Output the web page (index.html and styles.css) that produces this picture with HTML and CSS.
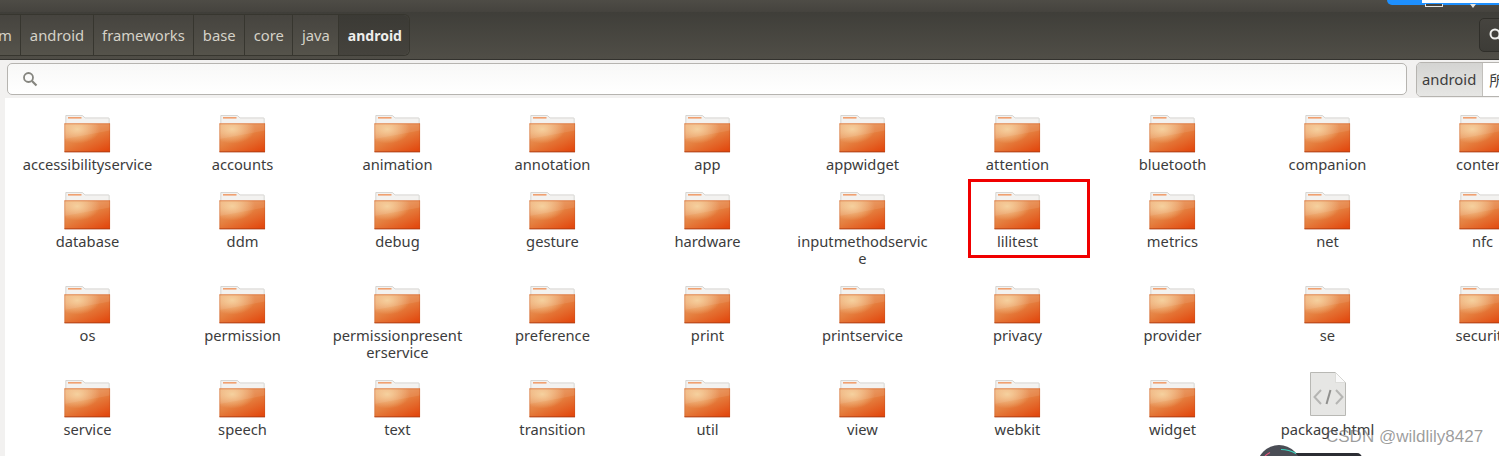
FILE: index.html
```html
<!DOCTYPE html>
<html lang="en">
<head>
  <meta charset="UTF-8">
  <title>android</title>
  <link rel="stylesheet" href="styles.css">
</head>
<body>

  <svg class="defs" width="0" height="0">
    <defs>
      <linearGradient id="folderFill" x1="0.15" y1="0" x2="0.85" y2="1">
        <stop offset="0" stop-color="#eca670"/>
        <stop offset="0.5" stop-color="#e57f3f"/>
        <stop offset="1" stop-color="#e2490f"/>
      </linearGradient>
      <radialGradient id="folderGlow" cx="0.28" cy="0.2" r="0.5">
        <stop offset="0" stop-color="#f6d09a" stop-opacity="0.95"/>
        <stop offset="1" stop-color="#f6d09a" stop-opacity="0"/>
      </radialGradient>
      <symbol id="folder" viewBox="0 0 48 38">
        <path d="M1.8.5h16.6l2.6 2.4h23.6a.6.6 0 0 1 .6.6V10H1.8z" fill="#f3f2f0" stroke="#c9c7c3" stroke-width="0.7"/>
        <rect x="4" y="2" width="13.5" height="1.6" fill="#f0a070"/>
        <rect x="0.5" y="8.5" width="45.5" height="28.5" fill="url(#folderFill)"/>
        <rect x="0.5" y="8.5" width="45.5" height="28.5" fill="url(#folderGlow)"/>
        <path d="M.5 24 46 15.5v-7H.5z" fill="#fff" opacity="0.08"/>
        <path d="M.5 8.8H46" stroke="#d9672c" stroke-width="0.6"/>
        <path d="M.8 8.5V37M45.7 8.5V37" stroke="#c4511f" stroke-width="0.5" opacity="0.7"/>
        <path d="M.5 36.9H46" stroke="#a83a12" stroke-width="0.9"/>
      </symbol>
    </defs>
  </svg>

  <div class="titlebar"></div>

  <div class="toolbar">
    <nav class="crumbs">
      <span class="crumb cut">m</span>
      <span class="crumb">android</span>
      <span class="crumb">frameworks</span>
      <span class="crumb">base</span>
      <span class="crumb">core</span>
      <span class="crumb">java</span>
      <span class="crumb current">android</span>
    </nav>
    <button class="tool-btn">
      <svg width="16" height="16" viewBox="0 0 16 16"><circle cx="7" cy="7" r="4.5" fill="none" stroke="#eeeeec" stroke-width="2"/><path d="M10.5 10.5 14 14" stroke="#eeeeec" stroke-width="2.4"/></svg>
    </button>
  </div>

  <div class="searchbar">
    <div class="search-field">
      <svg width="16" height="16" viewBox="0 0 16 16"><circle cx="6.5" cy="6.5" r="4.5" fill="none" stroke="#85857f" stroke-width="1.8"/><path d="M10 10l4.5 4.5" stroke="#85857f" stroke-width="2.2"/></svg>
    </div>
    <div class="scope">
      <span class="scope-item active">android</span>
      <span class="scope-item">所有文件</span>
    </div>
  </div>

  <main class="files">
    <div class="file"><svg class="icon"><use href="#folder"/></svg><span>accessibilityservice</span></div>
    <div class="file"><svg class="icon"><use href="#folder"/></svg><span>accounts</span></div>
    <div class="file"><svg class="icon"><use href="#folder"/></svg><span>animation</span></div>
    <div class="file"><svg class="icon"><use href="#folder"/></svg><span>annotation</span></div>
    <div class="file"><svg class="icon"><use href="#folder"/></svg><span>app</span></div>
    <div class="file"><svg class="icon"><use href="#folder"/></svg><span>appwidget</span></div>
    <div class="file"><svg class="icon"><use href="#folder"/></svg><span>attention</span></div>
    <div class="file"><svg class="icon"><use href="#folder"/></svg><span>bluetooth</span></div>
    <div class="file"><svg class="icon"><use href="#folder"/></svg><span>companion</span></div>
    <div class="file"><svg class="icon"><use href="#folder"/></svg><span>content</span></div>

    <div class="file"><svg class="icon"><use href="#folder"/></svg><span>database</span></div>
    <div class="file"><svg class="icon"><use href="#folder"/></svg><span>ddm</span></div>
    <div class="file"><svg class="icon"><use href="#folder"/></svg><span>debug</span></div>
    <div class="file"><svg class="icon"><use href="#folder"/></svg><span>gesture</span></div>
    <div class="file"><svg class="icon"><use href="#folder"/></svg><span>hardware</span></div>
    <div class="file"><svg class="icon"><use href="#folder"/></svg><span>inputmethodservic<br>e</span></div>
    <div class="file marked"><svg class="icon"><use href="#folder"/></svg><span>lilitest</span></div>
    <div class="file"><svg class="icon"><use href="#folder"/></svg><span>metrics</span></div>
    <div class="file"><svg class="icon"><use href="#folder"/></svg><span>net</span></div>
    <div class="file"><svg class="icon"><use href="#folder"/></svg><span>nfc</span></div>

    <div class="file"><svg class="icon"><use href="#folder"/></svg><span>os</span></div>
    <div class="file"><svg class="icon"><use href="#folder"/></svg><span>permission</span></div>
    <div class="file"><svg class="icon"><use href="#folder"/></svg><span>permissionpresent<br>erservice</span></div>
    <div class="file"><svg class="icon"><use href="#folder"/></svg><span>preference</span></div>
    <div class="file"><svg class="icon"><use href="#folder"/></svg><span>print</span></div>
    <div class="file"><svg class="icon"><use href="#folder"/></svg><span>printservice</span></div>
    <div class="file"><svg class="icon"><use href="#folder"/></svg><span>privacy</span></div>
    <div class="file"><svg class="icon"><use href="#folder"/></svg><span>provider</span></div>
    <div class="file"><svg class="icon"><use href="#folder"/></svg><span>se</span></div>
    <div class="file"><svg class="icon"><use href="#folder"/></svg><span>security</span></div>

    <div class="file"><svg class="icon"><use href="#folder"/></svg><span>service</span></div>
    <div class="file"><svg class="icon"><use href="#folder"/></svg><span>speech</span></div>
    <div class="file"><svg class="icon"><use href="#folder"/></svg><span>text</span></div>
    <div class="file"><svg class="icon"><use href="#folder"/></svg><span>transition</span></div>
    <div class="file"><svg class="icon"><use href="#folder"/></svg><span>util</span></div>
    <div class="file"><svg class="icon"><use href="#folder"/></svg><span>view</span></div>
    <div class="file"><svg class="icon"><use href="#folder"/></svg><span>webkit</span></div>
    <div class="file"><svg class="icon"><use href="#folder"/></svg><span>widget</span></div>
    <div class="file">
      <svg class="icon page" viewBox="0 0 36 44">
        <path d="M.5.5h25l10 10v33H.5z" fill="#e6e6e4" stroke="#b8b8b4"/>
        <path d="M25.5.5v10h10z" fill="#fafafa" stroke="#d4d4d1" stroke-width="0.7"/>
        <path d="M11 18l-6.500 7 6.500 7M26 18l6.500 7-6.500 7" fill="none" stroke="#b5b5b3" stroke-width="2"/>
        <path d="M20.500 18l-4 14" fill="none" stroke="#8f8f8d" stroke-width="2"/>
      </svg>
      <span>package.html</span>
    </div>
  </main>

  <div class="notify">
    <span class="notify-white"></span>
    <span class="notify-win"></span>
    <span class="notify-arrow"></span>
  </div>
  <div class="watermark">CSDN @wildlily8427</div>
  <svg class="float-ball" width="112" height="11" viewBox="0 0 112 11">
    <rect x="30" y="8" width="76" height="10" rx="5" fill="#2b2d33"/>
    <circle cx="23" cy="22" r="22" fill="#4a4d55"/>
    <path d="M25 4.500q8 .2 15 4" fill="none" stroke="#3fd9c4" stroke-width="1.200"/>
    <path d="M9 11q2-2 5-3.500" fill="none" stroke="#e0567c" stroke-width="1.200"/>
  </svg>

</body>
</html>
```

FILE: styles.css
```css
html, body {
  margin: 0;
  padding: 0;
  height: 456px;
  overflow: hidden;
}
body {
  position: relative;
  font-family: "Noto Sans", "Noto Sans CJK SC", sans-serif;
  background: #f2f1f0;
  color: #3c3c3c;
}
.defs {
  position: absolute;
}
.titlebar {
  height: 12px;
  background: linear-gradient(#4e4c46, #45433e);
}
.toolbar {
  height: 48px;
  box-sizing: border-box;
  background: linear-gradient(#3f3e39, #504e47);
  border-bottom: 1px solid #33322e;
  display: flex;
  align-items: center;
  justify-content: space-between;
  padding-bottom: 1px;
}
.crumbs {
  display: flex;
  height: 40px;
  margin-left: -2px;
  border: 1px solid #37362f;
  border-left: none;
  border-radius: 0 6px 6px 0;
  background: linear-gradient(#46443f, #55534b);
}
.crumb {
  padding: 0 8.5px;
  display: flex;
  align-items: center;
  font-size: 14.8px;
  color: #d5d2c8;
  border-right: 1px solid #37362f;
}
.crumb.cut {
  padding: 0 8.5px 0 0;
}
.crumb.current {
  padding: 0 7.5px 0 8.5px;
  font-size: 14px;
  font-weight: bold;
  color: #eeeeec;
  border-right: none;
  border-radius: 0 6px 6px 0;
  background: linear-gradient(#3b3a35, #45433d);
}
.tool-btn {
  width: 40px;
  height: 34px;
  margin-right: -20px;
  padding: 0 0 0 8px;
  border: 1px solid #302f2a;
  border-radius: 5px;
  background: linear-gradient(#46443f, #3d3c37);
  display: flex;
  align-items: center;
}
.searchbar {
  height: 38px;
  box-sizing: border-box;
  display: flex;
  align-items: center;
  padding: 0 0 0 7px;
}
.search-field {
  flex: none;
  width: 1400px;
  height: 32px;
  box-sizing: border-box;
  display: flex;
  align-items: center;
  padding-left: 14px;
  background: linear-gradient(#f8f8f7, #ffffff);
  border: 1px solid #b6b4b0;
  border-radius: 5px;
}
.scope {
  display: flex;
  flex: none;
  height: 35px;
  margin-left: 9px;
  box-sizing: border-box;
  border: 1px solid #b6b4b0;
  border-radius: 5px;
  overflow: hidden;
}
.scope-item {
  padding: 0 6px;
  display: flex;
  align-items: center;
  font-size: 14.8px;
  background: #fff;
  white-space: nowrap;
}
.scope-item.active {
  padding: 0 6px 0 5px;
  background: linear-gradient(#d4d4d2, #e6e6e4);
  border-right: 1px solid #c2c0bc;
}
.files {
  margin-left: 5px;
  height: 358px;
  padding: 17px 0 0 5px;
  box-sizing: border-box;
  background: #fff;
  display: grid;
  grid-template-columns: repeat(10, 155px);
  grid-auto-rows: min-content;
  overflow: hidden;
}
.file {
  display: flex;
  flex-direction: column;
  align-items: center;
  padding-bottom: 19px;
  position: relative;
  text-align: center;
  font-size: 14.7px;
  line-height: 17px;
}
.file span {
  margin-top: 3px;
}
.icon {
  width: 48px;
  height: 38px;
  flex: none;
}
.icon.page {
  width: 36px;
  height: 44px;
  margin-top: -8px;
  margin-bottom: 2px;
}
.marked::after {
  content: "";
  position: absolute;
  left: 28px;
  top: -13px;
  width: 122px;
  height: 79px;
  border: 3px solid #f00000;
  box-sizing: border-box;
}
.notify {
  position: absolute;
  top: 0;
  right: 0;
  width: 112px;
  height: 5px;
  background: #1e90ff;
  border-radius: 0 0 0 6px;
}
.notify-white {
  position: absolute;
  top: 0;
  left: 35px;
  right: 0;
  height: 3px;
  background: #fff;
}
.notify-win {
  position: absolute;
  top: 4px;
  left: 38px;
  width: 16px;
  height: 2px;
  background: #45433e;
  border: 1px solid #e4e4e2;
  border-top: none;
}
.notify-arrow {
  position: absolute;
  top: 4px;
  left: 83px;
  border: 3px solid transparent;
  border-top: 4px solid #e4e4e2;
}
.watermark {
  position: absolute;
  left: 1326px;
  top: 427px;
  font-family: "Liberation Sans", sans-serif;
  font-size: 17px;
  color: rgba(90, 90, 90, 0.6);
}
.float-ball {
  position: absolute;
  left: 1256px;
  top: 445px;
}
```
